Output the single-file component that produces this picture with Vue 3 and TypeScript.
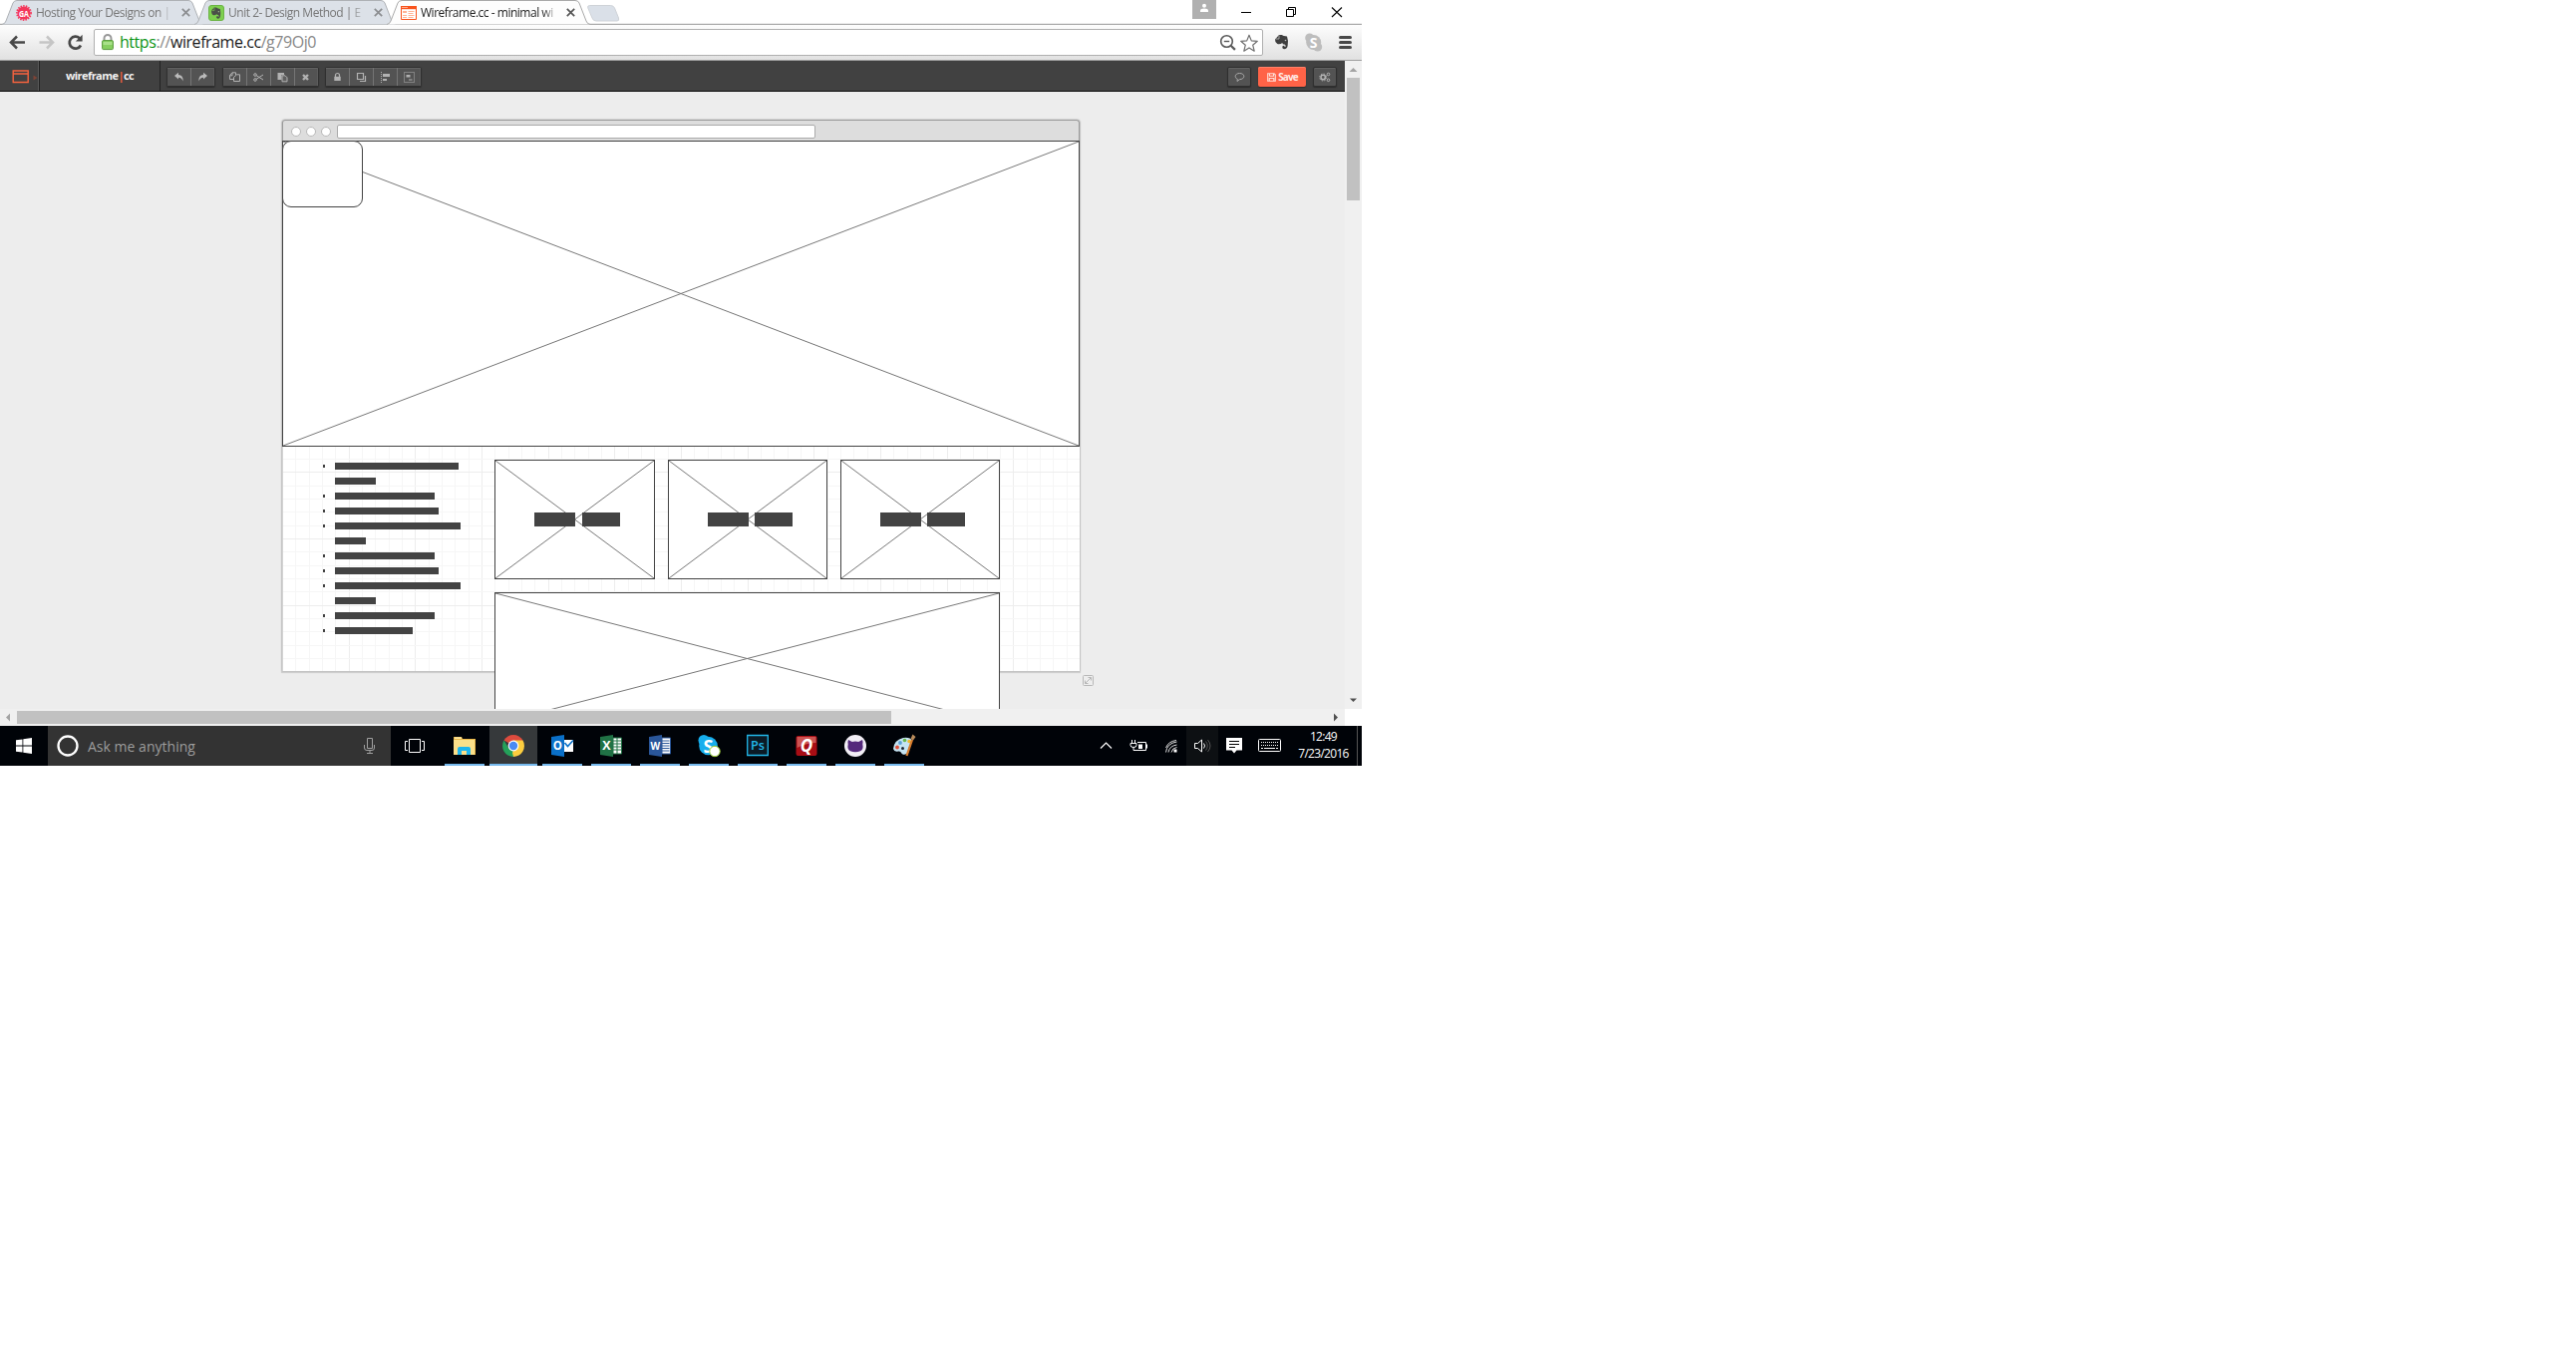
<script setup lang="ts">
interface Tab { title: string; kind: 'ga' | 'evernote' | 'wire'; active: boolean; width: number }
interface Box { x: number; y: number; w: number; h: number }
interface Tile extends Box { label: number[]; gap: number }
interface Row { width: number; bullet: boolean }

const tabs: Tab[] = [
  { title: 'Hosting Your Designs on |', kind: 'ga', active: false, width: 203 },
  { title: 'Unit 2- Design Method | E', kind: 'evernote', active: false, width: 203 },
  { title: 'Wireframe.cc - minimal wi', kind: 'wire', active: true, width: 205 },
]

const toolGroups: string[][] = [
  ['undo', 'redo'],
  ['copy', 'cut', 'paste', 'delete'],
  ['lock', 'front', 'align', 'group'],
]

const hero: Box = { x: 0, y: 21, w: 800, h: 307 }
const tiles: Tile[] = [
  { x: 213, y: 341, w: 161, h: 120, label: [41, 38], gap: 7 },
  { x: 387, y: 341, w: 160, h: 120, label: [41, 38], gap: 6 },
  { x: 560, y: 341, w: 160, h: 120, label: [41, 38], gap: 6 },
]
const banner: Box = { x: 213, y: 474, w: 507, h: 133 }
const images: Box[] = [hero, ...tiles, banner]

const rows: Row[] = [
  { width: 124, bullet: true }, { width: 41, bullet: false },
  { width: 100, bullet: true }, { width: 104, bullet: true },
  { width: 126, bullet: true }, { width: 31, bullet: false },
  { width: 100, bullet: true }, { width: 104, bullet: true },
  { width: 126, bullet: true }, { width: 41, bullet: false },
  { width: 100, bullet: true }, { width: 78, bullet: true },
]

const cell = 40 / 3
const vLines = Array.from({ length: 59 }, (_, i) => ({ p: Math.round((i + 1) * cell) + 0.5, major: (i + 1) % 5 === 0 }))
const hLines = Array.from({ length: 39 }, (_, i) => ({ p: Math.round((i + 1) * cell) - 0.5, major: (i + 1) % 5 === 0 }))

const apps: string[] = ['explorer', 'chrome', 'outlook', 'excel', 'word', 'skype', 'ps', 'quicken', 'github', 'paint']

function place(b: Box) {
  return { left: b.x + 'px', top: b.y + 'px', width: b.w + 'px', height: b.h + 'px' }
}
</script>

<template>
  <div class="desktop">
    <header class="tabstrip">
      <div v-for="t in tabs" :key="t.kind" class="tab" :class="{ active: t.active }" :style="{ width: t.width + 'px' }">
        <svg class="tab-shape" :width="t.width" height="25" :viewBox="`0 0 ${t.width} 25`">
          <path :d="`M0 24.5 Q3 24 4 21 L11 3 Q12 .5 15 .5 H${t.width - 16} Q${t.width - 13} .5 ${t.width - 12} 3 L${t.width - 5} 21 Q${t.width - 4} 24 ${t.width - 1} 24.5`" />
        </svg>
        <svg v-if="t.kind === 'ga'" class="fav" width="16" height="16" viewBox="0 0 16 16">
          <circle cx="8" cy="8" r="6.6" fill="#f4375b" /><circle cx="8" cy="8" r="7.1" fill="none" stroke="#f4375b" stroke-width="1.6" stroke-dasharray="1.5 1.2" />
          <text x="3" y="11.500" class="glyph" font-size="9.500" textLength="10" lengthAdjust="spacingAndGlyphs">GA</text>
        </svg>
        <svg v-else-if="t.kind === 'evernote'" class="fav" width="16" height="16" viewBox="0 0 16 16">
          <rect x=".5" y=".5" width="15" height="15" rx="2.500" fill="#7ed04f" stroke="#6bb345" />
          <path d="M3 5.500 5.800 2.600H8q1 .6 1.800.8l2 .5q.8 3.600.2 7.600-.5 2.300-2.600 2.200-1.600-.3-1.300-1.700.2-1 1.600-.9v1h.8q.2-1.800-.8-2-1.300 0-1.400-1-1 1.500-3.200 1.100Q3 9.500 3 5.500z" fill="#4a4f48" />
          <path d="M6 3v2.600H3.400" fill="none" stroke="#7ed04f" stroke-width=".6" /><circle cx="10.300" cy="6.700" r=".6" fill="#b9dba8" />
        </svg>
        <svg v-else class="fav" width="16" height="16" viewBox="0 0 16 16">
          <path d="M.5 1.500h15v13H.5z" fill="#fff" stroke="#f9531c" /><path d="M0 1h16v3.200H0z" fill="#f9531c" />
          <path d="M1.500 2.500h1m1 0h1m1 0h1" stroke="#fff" /><path d="M2 6.500h4M2 7.500h4M7.500 6.500h6M7.500 8.500h5M2 10.500h4M7.500 10.500h6M2 12.500h4M7.500 12.500h5" stroke="#ffb396" />
        </svg>
        <span class="tab-title">{{ t.title }}</span>
        <svg class="tab-close" width="9" height="9" viewBox="0 0 9 9"><path d="M.8.8l7.400 7.400M8.200.8.8 8.200" /></svg>
      </div>
      <svg class="newtab" width="33" height="17" viewBox="0 0 33 17"><path d="M2.500.5h21q3 0 4 2.500l4 10q1 3-1.500 3H9q-3 0-4-3L.8 3Q0 .5 2.500.5z" fill="#dae0e8" stroke="#cfd3d8" /></svg>
      <div class="win">
        <span class="user"><svg width="24" height="19" viewBox="0 0 24 19"><circle cx="12" cy="5.800" r="2" fill="#fff" /><path d="M8 12V10.500q0-2 4-2t4 2V12z" fill="#fff" /></svg></span>
        <svg width="138" height="24" viewBox="0 0 138 24" fill="none" stroke="#000">
          <path d="M25 12.500h10M70.500 9.500h7v7h-7zM72.500 9.500v-2h7v7h-2" /><path d="M116 7.500l10 9.500M126 7.500l-10 9.500" stroke-width="1.100" />
        </svg>
      </div>
    </header>

    <nav class="navbar">
      <svg class="nav-icons" width="94" height="36" viewBox="0 0 94 36" fill="none">
        <path d="M11.500 17.500H25M17 11.500l-6 6 6 6" stroke="#484848" stroke-width="2.500" />
        <path d="M39.500 17.500H52M47 11.500l6 6-6 6" stroke="#c5c5c5" stroke-width="2.500" />
        <path d="M81 20.500a6 6 0 1 1-1.200-7.200" stroke="#484848" stroke-width="2.700" /><path d="M82.600 9.800v6.700h-6.700z" fill="#484848" />
      </svg>
      <div class="omnibox">
        <svg class="padlock" width="12" height="17" viewBox="0 0 12 17">
          <path d="M2.500 8V4.500a3.500 3.500 0 0 1 7 0V8" fill="none" stroke="#999" stroke-width="2" />
          <rect x=".6" y="6.600" width="10.800" height="9" rx="1" fill="#86cf60" stroke="#58983c" /><path d="M1.500 8h9v3h-9z" fill="#a9e08a" />
        </svg>
        <span class="url"><i>https</i><s>://</s>wireframe.cc<s>/g79Oj0</s></span>
        <svg class="omni-icons" width="42" height="24" viewBox="0 0 42 24" fill="none">
          <circle cx="8.500" cy="10.500" r="5.800" stroke="#5a5a5a" stroke-width="1.600" /><path d="M5.800 10.500h5.400" stroke="#5a5a5a" stroke-width="1.400" /><path d="M12.700 14.700l4.200 4.200" stroke="#5a5a5a" stroke-width="2.200" />
          <path d="M31 4.200l2.300 5.700 6 .4-4.600 3.900 1.500 6-5.200-3.300-5.200 3.300 1.500-6-4.600-3.900 6-.4z" stroke="#707070" stroke-width="1.200" stroke-linejoin="round" />
        </svg>
      </div>
      <svg width="99" height="36" viewBox="0 0 99 36">
        <path d="M12 14.500 16 10h3q1 1 2 1l3 .5q1.500 4 .7 9-.4 3.800-3.700 3.800-2-.3-1.700-2.300.2-1.500 2.200-1.300v1.400h1q.4-2.300-1-2.700-2 .2-2.200-1.500-2 2-5 1.200-2.500-1.500-2.300-4.600z" fill="#3f3f3f" />
        <path d="M16 10.500v3.500h-3.500" fill="none" stroke="#bbb" stroke-width=".8" /><circle cx="22.500" cy="15.500" r=".8" fill="#bbb" />
        <circle cx="50.700" cy="17.500" r="7.500" fill="#bdbdbd" /><circle cx="46.700" cy="13" r="4.500" fill="#bdbdbd" /><circle cx="54.700" cy="22" r="4.500" fill="#bdbdbd" />
        <text x="50.500" y="22.500" class="glyph" font-size="14" text-anchor="middle">S</text>
        <path d="M77.500 12.500h10M77.500 17.500h10M77.500 22.500h10" stroke="#484848" stroke-width="3" stroke-linecap="round" />
      </svg>
    </nav>

    <div class="viewport">
      <div class="page">
        <div class="appbar">
          <div class="brand-icon">
            <svg width="28" height="14" viewBox="0 0 28 14" fill="none"><path d="M1.200 1h15v11.500h-15zM1 4h15" stroke="#f8633f" stroke-width="1.400" /><path d="M21.500 5.500l4 2.500-4 2.500z" fill="#7f4437" /></svg>
          </div>
          <div class="brand">wireframe<b>|</b>cc</div>
          <div class="groups">
            <div v-for="(g, gi) in toolGroups" :key="gi" class="group">
              <button v-for="n in g" :key="n" class="tool">
                <svg width="13" height="11" viewBox="0 0 13 11">
                  <path v-if="n === 'undo'" d="M2 4 6 .8V3q5 0 4.500 6.500Q9.500 6 6 5.800V7.500z" fill="#bbb" />
                  <path v-else-if="n === 'redo'" d="M11 4 7 .8V3Q2 3 2.500 9.500 3.500 6 7 5.800V7.500z" fill="#bbb" />
                  <path v-else-if="n === 'copy'" d="M4 .8h3.500V3M4 .8 1.500 3.500v4H5M8.500 2.800h3v6.700H5.500V5.500zM4 .8v3H1.500" fill="none" stroke="#b2b2b2" />
                  <g v-else-if="n === 'cut'" fill="none" stroke="#b2b2b2"><circle cx="3" cy="3" r="1.300" /><circle cx="3" cy="8" r="1.300" /><path d="M4 3.600 11 8M4 7.400 11 3" /></g>
                  <g v-else-if="n === 'paste'"><path d="M1.500 1H8v2H5.500v5h-4z" fill="#b2b2b2" /><path d="M6 3.800h3l2 2v4H6z" fill="#606060" stroke="#b2b2b2" /></g>
                  <path v-else-if="n === 'delete'" d="M4 3l5 5M9 3 4 8" stroke="#b2b2b2" stroke-width="2.400" />
                  <g v-else-if="n === 'lock'"><path d="M4.500 5V3.500a2 2 0 0 1 4 0V5" fill="none" stroke="#b2b2b2" stroke-width="1.200" /><path d="M3.300 4.800h6.400V9H3.300z" fill="#b2b2b2" /></g>
                  <path v-else-if="n === 'front'" d="M2.500 1.500h6v6h-6zM10.500 4v5.500H5" fill="none" stroke="#b2b2b2" stroke-width="1.200" />
                  <g v-else-if="n === 'align'"><path d="M2.500 0v11" stroke="#b2b2b2" stroke-dasharray="1 1" /><path d="M4 2h7v3H4zM4 7h4v2H4z" fill="#b2b2b2" /></g>
                  <g v-else><path d="M1.500.5h10v10h-10z" fill="none" stroke="#b2b2b2" stroke-dasharray="1 1" /><path d="M3.500 3h4v2.500h-4zM6 7.500h3.500v1H6z" fill="#b2b2b2" /></g>
                </svg>
              </button>
            </div>
          </div>
          <div class="actions">
            <button class="tool solo"><svg width="11" height="11" viewBox="0 0 11 11"><path d="M5.500 1.500c2.500 0 4.300 1.200 4.300 3S8 7.600 5.500 7.600L3 9.500l.3-2.200C2 6.700 1.200 5.600 1.200 4.500c0-1.800 1.800-3 4.300-3z" fill="none" stroke="#aaa" /></svg></button>
            <button class="save"><svg width="9" height="9" viewBox="0 0 9 9"><path d="M.7.7h6.400l1.200 1.200v6.400H.7zM2.500.7v2.600h4V.7M2.300 8.200V5.500h4.500v2.700" fill="none" stroke="#ffe0d9" stroke-width="1.100" /></svg>Save</button>
            <button class="tool solo"><svg width="12" height="11" viewBox="0 0 12 11" fill="none" stroke="#b5b5b5"><circle cx="4.200" cy="5.500" r="2.200" stroke-width="1.500" /><circle cx="4.200" cy="5.500" r="3.500" stroke-dasharray="1.400 1.350" /><circle cx="9.500" cy="2.500" r="1.300" /><circle cx="9.500" cy="8.300" r="1.300" /></svg></button>
          </div>
        </div>

        <div class="stage">
          <div class="mock">
            <div class="mock-bar"><i /><i /><i /><span /></div>
            <svg width="800" height="532" viewBox="0 0 800 532" shape-rendering="crispEdges">
              <path v-for="l in vLines" :key="'v' + l.p" :d="`M${l.p} 0V532`" :stroke="l.major ? '#ededed' : '#f6f6f6'" />
              <path v-for="l in hLines" :key="'h' + l.p" :d="`M0 ${l.p}H800`" :stroke="l.major ? '#ededed' : '#f6f6f6'" />
              <path d="M.5 0V532" stroke="#d4d4d4" />
            </svg>
            <div v-for="(b, i) in images" :key="i" class="image" :style="place(b)">
              <svg :width="b.w - 2" :height="b.h - 2" :viewBox="`0 0 ${b.w - 2} ${b.h - 2}`">
                <path :d="`M0 0L${b.w - 2} ${b.h - 2}M${b.w - 2} 0L0 ${b.h - 2}`" stroke="#777" />
              </svg>
            </div>
            <div class="rounded" />
            <div v-for="(t, i) in tiles" :key="'t' + i" class="label" :style="{ ...place(t), gap: t.gap + 'px' }">
              <i v-for="w in t.label" :key="w" :style="{ width: w + 'px' }" />
            </div>
            <ul class="rows">
              <li v-for="(r, i) in rows" :key="i"><b :class="{ dot: r.bullet }" /><i :style="{ width: r.width + 'px' }" /></li>
            </ul>
            <svg class="resize" width="12" height="12" viewBox="0 0 12 12" fill="none" stroke="#b8b8b8"><rect x=".5" y=".5" width="10" height="10" rx="1" /><path d="M2.500 8.500l6-6M5.500 2.500h3v3M2.500 5.500v3h3" /></svg>
          </div>
        </div>
      </div>
      <div class="vscroll">
        <svg width="17" height="17" viewBox="0 0 17 17"><path d="M4.500 11h8L8.500 7z" fill="#a3a3a3" /></svg>
        <div class="vthumb" />
        <svg width="17" height="17" viewBox="0 0 17 17"><path d="M5 6.500h7L8.500 10z" fill="#505050" /></svg>
      </div>
    </div>
    <div class="hscroll">
      <svg width="17" height="17" viewBox="0 0 17 17"><path d="M10 4.500v8L6 8.500z" fill="#a3a3a3" /></svg>
      <div class="hthumb" />
      <svg class="right" width="17" height="17" viewBox="0 0 17 17"><path d="M6 4.500v8l4-4z" fill="#505050" /></svg>
      <div class="corner" />
    </div>

    <footer class="taskbar">
      <div class="start"><svg width="16" height="16" viewBox="0 0 16 16" fill="#fff"><path d="M0 2.300 6.500 1.400V7.500H0zM7.300 1.200 16 0v7.500H7.300zM0 8.400h6.500v6.200L0 13.700zM7.300 8.400H16V16l-8.700-1.300z" /></svg></div>
      <div class="search">
        <svg width="22" height="22" viewBox="0 0 22 22"><circle cx="11" cy="11" r="9.500" fill="none" stroke="#fff" stroke-width="2.300" /></svg>
        <span>Ask me anything</span>
        <svg class="mic" width="12" height="18" viewBox="0 0 12 18" fill="none" stroke="#a0a0a0"><path d="M3.500 1.500h5v10h-5zM.5 8v3q0 2.500 2.500 2.500h5q2.500 0 2.500-2.500V8M6 13.500v3M3 16.500h6" /></svg>
      </div>
      <div class="taskview"><svg width="20" height="14" viewBox="0 0 20 14" fill="none" stroke="#fff"><path d="M4.500.5h11v13h-11zM3 2.500H.5v9H3M17 2.500h2.500v9H17" /></svg></div>
      <div class="apps">
        <div v-for="a in apps" :key="a" class="app" :class="{ current: a === 'chrome' }">
          <svg width="24" height="24" viewBox="0 0 24 24">
            <g v-if="a === 'explorer'"><path d="M1 3h8l1 2h13v16H1z" fill="#e9b84a" /><path d="M1 6h21v15H1z" fill="#fbe08a" /><path d="M2 3.500h7v1.300H2z" fill="#fff2b8" /><path d="M5 21v-6q0-2 2-2h9q2 0 2 2v6h-4v-4H9v4z" fill="#1fb6ee" /></g>
            <g v-else-if="a === 'chrome'">
              <path d="M12 12 2.500 6.500A11 11 0 0 1 21.500 6.500z" fill="#dd4b3e" /><path d="M12 12V6.500h9.500A11 11 0 0 1 12 23z" fill="#fccd3f" /><path d="M12 12 12 23A11 11 0 0 1 2.500 6.500L7 14l5 3z" fill="#24a15a" /><path d="M16.500 14.500 12 23l-1-4 1-3z" fill="#fccd3f" />
              <circle cx="12" cy="12" r="5.400" fill="#fff" /><circle cx="12" cy="12" r="4.200" fill="#4a8af4" />
            </g>
            <g v-else-if="a === 'outlook'"><path d="M1 3 14 1v22L1 21z" fill="#0a70c8" /><path d="M14 6h9v12h-9z" fill="#fff" /><path d="M14.500 9l3 3.500L23 6.500" fill="none" stroke="#0a70c8" stroke-width="1.600" /><text x="7.300" y="16" class="glyph" font-size="11.500" text-anchor="middle">O</text></g>
            <g v-else-if="a === 'excel'"><path d="M14 4h8.500v16H14z" fill="#fff" stroke="#207245" /><path d="M14 7h8M14 10h8M14 13h8M14 16h8M18 4v16" stroke="#207245" /><path d="M1 3 14 1v22L1 21z" fill="#207245" /><text x="7.300" y="16.300" class="glyph" font-size="12.500" text-anchor="middle">X</text></g>
            <g v-else-if="a === 'word'"><path d="M14 4h8.500v16H14z" fill="#fff" stroke="#2a5699" /><path d="M14 7h7.500M14 9.500h7.500M14 12h7.500M14 14.500h7.500M14 17h7.500" stroke="#2a5699" /><path d="M1 3 14 1v22L1 21z" fill="#2a5699" /><text x="7.400" y="15.800" class="glyph" font-size="10" text-anchor="middle">W</text></g>
            <g v-else-if="a === 'skype'"><circle cx="11.500" cy="12" r="9.300" fill="#16aeed" /><circle cx="7" cy="6.500" r="5.500" fill="#16aeed" /><text x="11.500" y="18.500" class="glyph" font-size="18" text-anchor="middle">S</text><circle cx="18" cy="17.500" r="5.200" fill="#fff" stroke="#9acb2f" /></g>
            <g v-else-if="a === 'ps'"><path d="M1.700 1.500h20.600v20H1.700z" fill="#0b1a25" stroke="#22b8ea" stroke-width="1.300" /><text x="5" y="16.300" class="ps" textLength="14" lengthAdjust="spacingAndGlyphs">Ps</text></g>
            <g v-else-if="a === 'quicken'"><rect x="1.500" y="2" width="21" height="20" rx="2" fill="#a80d14" /><path d="M2.500 3h19v6q-9 0-19 5z" fill="#cc5452" /><text x="12" y="17.500" class="glyph" font-size="17" font-style="italic" text-anchor="middle">Q</text></g>
            <g v-else-if="a === 'github'"><circle cx="12" cy="12" r="11" fill="#f1eef5" /><path d="M5 6l3.800 2q3.200-.8 6.400 0L19 6q1 2 .3 4.500 1.200 5-2.300 6.800-5 1.800-10 0-3.500-1.800-2.300-6.800Q4 8 5 6z" fill="#54297c" /></g>
            <g v-else><path d="M1 15Q2 6 11 4q7-1 9 3l-2 6q-2 0-1.500 2.500Q18 19 13 20.500q-3 1-4-1.500-.5-2-3-1.500-4 1-5-2.500z" fill="#c5e4f2" /><circle cx="5" cy="13.500" r="1.900" fill="#e0503a" /><circle cx="8" cy="9" r="1.900" fill="#5b9fd6" /><circle cx="12.500" cy="6.500" r="1.800" fill="#67b84a" /><circle cx="10.500" cy="14.500" r="1.500" fill="#1a2633" /><circle cx="17" cy="7.500" r="1.700" fill="#f2b92b" /><path d="M20 6 14.500 22" stroke="#d77b2b" stroke-width="2.200" /><path d="M18.500 5l2-4.500L23.500 3 21 6.500z" fill="#b98c5c" /></g>
          </svg>
        </div>
      </div>
      <div class="tray">
        <svg width="127" height="40" viewBox="0 0 127 40" fill="none" stroke="#fff">
          <path d="M6 22.500l5.500-5.500 5.500 5.500" stroke-width="1.200" />
          <path d="M43 16.500h8.500v8H43M52.500 18.500v4M37.500 14v3M40.500 14v3M36 17.500h6v2q0 2-3 2t-3-2zM39 21.500v3h4" /><path d="M44 18.500h4V23h-4z" fill="#fff" stroke="none" />
          <path d="M71.500 26.500q1-9 11-10.500M74 26.500q1-6.500 8.500-7.500M77 26.500q1-4.500 5.500-5M71.500 22q2.500-6.500 10.500-7.500" stroke="#ddd" /><path d="M79.500 23.500h3v3h-3z" fill="#fff" stroke="none" />
          <path d="M92 0h32v40H92z" fill="#0d1013" stroke="none" />
          <path d="M100.500 17.500h3l4-3.500v12l-4-3.500h-3z" /><path d="M109.500 17.500q2 2.500 0 5" /><path d="M111.500 15.500q3.500 4.500 0 9M113.500 14q5 6 0 12" stroke="#555" />
        </svg>
        <svg width="73" height="40" viewBox="0 0 73 40">
          <path d="M5 12h16v12.500h-5.500L13 27.500 10.500 24.500H5z" fill="#fff" /><path d="M8 15.500h10M8 18.500h10M8 21.500h6" stroke="#000" />
          <rect x="37.500" y="13.500" width="22" height="12" rx="1" fill="none" stroke="#fff" /><path d="M40 16.500h17M40 19.500h17" stroke="#fff" stroke-dasharray="1 1" /><path d="M40 22.500h2M43 22.500h11M55 22.500h2" stroke="#fff" />
        </svg>
        <div class="clock"><span>12:49</span><span>7/23/2016</span></div>
        <div class="peek" />
      </div>
    </footer>
  </div>
</template>

<style>
body { background: #fff; }
</style>

<style scoped>
* { box-sizing: border-box; }
svg { display: block; flex: none; }
.glyph { font-family: "Open Sans", sans-serif; font-weight: 700; fill: #fff; }
.desktop { width: 1366px; height: 768px; display: flex; flex-direction: column; overflow: hidden; background: #fff; font-family: "Open Sans", "Noto Sans", sans-serif; }

.tabstrip { height: 24px; display: flex; flex: none; padding-left: 2px; background: #fff; position: relative; box-shadow: inset 0 -1px #ececec; }
.tab { height: 25px; display: flex; align-items: center; position: relative; margin-right: -10px; padding: 0 13px 0 14px; flex: none; }
.tab-shape { position: absolute; left: 0; top: 0; }
.tab-shape path { fill: #dce1e8; stroke: #aeb1b5; }
.tab.active { z-index: 2; }
.tab.active .tab-shape path { fill: #fdfdfd; stroke: #a9a9a9; }
.fav { position: relative; margin-right: 4px; }
.tab-title { position: relative; width: 138px; overflow: hidden; white-space: nowrap; font-size: 12px; letter-spacing: -.48px; line-height: 24px; color: #777; -webkit-mask-image: linear-gradient(90deg, #000 122px, transparent 138px); mask-image: linear-gradient(90deg, #000 122px, transparent 138px); }
.tab.active .tab-title { color: #222; }
.tab-close { position: relative; margin-left: 8px; }
.tab-close path { stroke: #8b8d90; stroke-width: 1.7; fill: none; }
.active .tab-close path { stroke: #555; }
.newtab { margin: 5px 0 0 6px; }
.win { margin-left: auto; display: flex; align-items: flex-start; }
.user { width: 24px; height: 19px; background: #b0b0b0; }
.user + svg { margin-right: 8px; }

.navbar { height: 37px; flex: none; display: flex; align-items: flex-start; border-top: 1px solid #a9a9a9; border-bottom: 1px solid #9f9f9f; background: linear-gradient(#fdfdfd, #e1e1e1); }
.omnibox { width: 1173px; height: 27px; margin-top: 4px; border: 1px solid #b0b0b0; border-radius: 2px; background: #fff; display: flex; align-items: center; padding: 0 2px 0 7px; }
.padlock { margin-right: 6px; }
.url { font-size: 16px; letter-spacing: -.45px; line-height: 24px; margin-top: -2px; color: #1a1a1a; white-space: nowrap; }
.url i { font-style: normal; color: #0b9413; }
.url s { text-decoration: none; color: #888; }
.omni-icons { margin-left: auto; }

.viewport { height: 650px; display: flex; flex: none; }
.page { width: 1349px; display: flex; flex-direction: column; background: #ededed; overflow: hidden; }
.appbar { height: 31px; flex: none; display: flex; background: #414141; border-bottom: 1px solid #111; }
.brand-icon { width: 40px; padding: 9px 0 0 12px; border-right: 1px solid #222; box-shadow: inset -1px 0 #5a5a5a; }
.brand { width: 121px; border-right: 1px solid #222; text-align: center; font-size: 11px; font-weight: 700; line-height: 30px; letter-spacing: -.55px; color: #f2f2f2; }
.brand b { color: #f8633f; font-weight: 700; }
.groups { display: flex; gap: 6.5px; padding: 6px 0 0 6px; }
.group { display: flex; height: 20px; border: 1px solid #303030; border-radius: 2px; box-shadow: 0 1px 1px #2d2d2d; }
.tool { width: 24px; height: 18px; padding: 0; border: 0; border-right: 1px solid #757575; background: #535353; display: flex; align-items: center; justify-content: center; box-shadow: inset 0 1px #626262; }
.group .tool:last-child { width: 23px; border-right-color: #5c5c5c; }
.actions { margin-left: auto; display: flex; gap: 7px; padding: 6px 8px 0 0; }
.tool.solo { height: 20px; border: 1px solid #2f2f2f; border-radius: 2px; box-shadow: 0 1px 1px #2d2d2d, inset 0 1px #626262; }
.save { width: 48px; height: 20px; border: 0; padding: 0 0 0 1px; border-radius: 2px; background: #ff6347; color: #ffe9e4; display: flex; align-items: center; justify-content: center; gap: 2px; font: 700 10px "Open Sans", sans-serif; letter-spacing: -.9px; box-shadow: 0 1px 1px #2d2d2d, inset 0 1px #ff8068; }

.stage { flex: 1; padding: 28px 0 0 283px; overflow: hidden; }
.mock { position: relative; width: 800px; height: 553px; background: #fff; border-radius: 3px 3px 0 0; box-shadow: 0 0 2px #aaa, 0 1px 1px 1px #ccc; }
.mock-bar { height: 21px; background: #ddd; border: 1px solid #999; border-bottom: 0; border-radius: 3px 3px 0 0; display: flex; align-items: center; padding: 2px 0 0 8px; gap: 5px; }
.mock-bar i { width: 10px; height: 10px; border: 1px solid #b8b8b8; border-radius: 50%; background: #fff; }
.mock-bar span { width: 480px; height: 14px; border: 1px solid #aaa; border-radius: 2px; background: #fff; margin-left: 1px; }
.image { position: absolute; border: 1px solid #434343; background: #fff; }
.rounded { position: absolute; left: 0; top: 21px; width: 81px; height: 67px; border: 1px solid #434343; border-radius: 9px; background: #fff; }
.label { position: absolute; display: flex; justify-content: flex-start; padding: 53px 0 0 40px; }
.label i { height: 14px; background: #434343; }
.rows { position: absolute; left: 41px; top: 344px; margin: 0; padding: 0; list-style: none; }
.rows li { display: flex; align-items: center; height: 7px; margin-bottom: 8px; }
.rows b { width: 2px; height: 3px; margin-right: 10px; }
.rows b.dot { background: #434343; }
.rows i { height: 7px; background: #434343; }
.resize { position: absolute; left: 803px; top: 557px; }

.vscroll { width: 17px; background: #f0f0f0; display: flex; flex-direction: column; }
.vthumb { width: 13px; height: 123px; margin: 0 2px auto; background: #c1c1c1; }
.hscroll { height: 17px; flex: none; display: flex; background: #f0f0f0; }
.hthumb { width: 877px; height: 13px; margin-top: 2px; background: #c1c1c1; }
.right { margin-left: auto; }
.corner { width: 17px; background: #fff; }

.taskbar { height: 40px; flex: none; display: flex; background: #000308; color: #fff; }
.start { width: 48px; padding: 12px 0 0 16px; }
.search { width: 344px; background: #333; display: flex; align-items: center; padding-left: 9px; }
.search span { margin-left: 9px; color: #9c9c9c; font-size: 14px; letter-spacing: .02px; white-space: nowrap; }
.mic { margin: 0 15px 0 auto; }
.taskview { width: 50px; padding: 13px 0 0 14px; }
.apps { display: flex; gap: 1px; }
.app { width: 48px; height: 40px; padding: 8px 12px 0; position: relative; }
.app::after { content: ""; position: absolute; left: 4px; right: 4px; bottom: 0; height: 2px; background: #76b9ed; }
.app.current { background: #36393b; }
.app.current::after { left: 0; right: 0; }
.ps { font: 600 12.500px "Open Sans", sans-serif; fill: #22b8ea; }
.tray { margin-left: auto; display: flex; }
.clock { width: 63px; display: flex; flex-direction: column; align-items: center; padding: 2px 4px 0 0; font-size: 12px; line-height: 17px; letter-spacing: -.7px; }
.peek { width: 5px; border-left: 1px solid #555; }
</style>
